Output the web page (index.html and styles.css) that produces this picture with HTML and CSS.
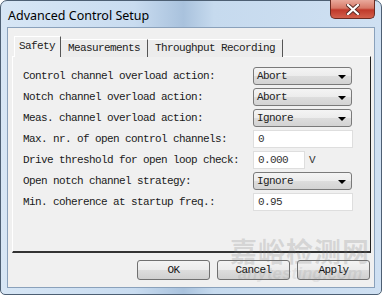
FILE: index.html
```html
<!DOCTYPE html>
<html lang="en">
<head>
<meta charset="UTF-8">
<title>Advanced Control Setup</title>
<link rel="stylesheet" href="styles.css">
</head>
<body>
<div class="window">
  <div class="titlebar">
    <span class="title">Advanced Control Setup</span>
    <span class="close">
      <svg width="14" height="11" viewBox="0 0 14 11">
        <path d="M2 1 L12 10 M12 1 L2 10" stroke="#5a2a24" stroke-width="4" stroke-linecap="square"/>
        <path d="M2 1 L12 10 M12 1 L2 10" stroke="#fff" stroke-width="2.2" stroke-linecap="square"/>
      </svg>
    </span>
  </div>
  <div class="client">
    <div class="tabs">
      <div class="tab active">Safety</div>
      <div class="tab">Measurements</div>
      <div class="tab">Throughput Recording</div>
    </div>
    <div class="panel">
      <div class="row">
        <span class="label">Control channel overload action:</span>
        <div class="select">Abort<i class="arrow"></i></div>
      </div>
      <div class="row">
        <span class="label">Notch channel overload action:</span>
        <div class="select">Abort<i class="arrow"></i></div>
      </div>
      <div class="row">
        <span class="label">Meas. channel overload action:</span>
        <div class="select">Ignore<i class="arrow"></i></div>
      </div>
      <div class="row">
        <span class="label">Max. nr. of open control channels:</span>
        <div class="field">0</div>
      </div>
      <div class="row">
        <span class="label">Drive threshold for open loop check:</span>
        <div class="field small">0.000</div>
        <span class="unit">V</span>
      </div>
      <div class="row">
        <span class="label">Open notch channel strategy:</span>
        <div class="select">Ignore<i class="arrow"></i></div>
      </div>
      <div class="row">
        <span class="label">Min. coherence at startup freq.:</span>
        <div class="field">0.95</div>
      </div>
    </div>
    <div class="buttons">
      <button type="button" class="btn">OK</button>
      <button type="button" class="btn">Cancel</button>
      <button type="button" class="btn">Apply</button>
    </div>
    <div class="watermark">
      <span class="wm-cn">嘉峪检测网</span>
      <span class="wm-en">anytesting.com</span>
    </div>
  </div>
</div>
</body>
</html>
```

FILE: styles.css
```css
body {
  margin: 0;
  width: 382px;
  height: 295px;
  background: #fff;
  font-family: 'Liberation Mono', monospace;
  font-size: 11px;
  letter-spacing: -0.6px;
  color: #111;
}
.window {
  box-sizing: border-box;
  width: 382px;
  height: 295px;
  border: 1px solid #4d5f73;
  border-radius: 7px 7px 5px 5px;
  padding: 0 6px 6px 6px;
  background: linear-gradient(90deg, #d7e6f5 0%, #c9dcf0 35%, #a9c2dd 48%, #c6daee 56%, #cfe0f2 100%);
  display: flex;
  flex-direction: column;
}
.titlebar {
  height: 26px;
  display: flex;
  align-items: flex-start;
}
.title {
  font-family: 'Noto Sans', sans-serif;
  font-size: 12.5px;
  letter-spacing: 0;
  line-height: 16px;
  padding: 7px 0 0 1px;
  color: #000;
}
.close {
  margin: -1px 0 0 auto;
  width: 45px;
  height: 19px;
  box-sizing: border-box;
  border: 1px solid #6b2b22;
  border-top: none;
  border-radius: 0 0 5px 5px;
  background: linear-gradient(#e9a99c 0%, #d77867 45%, #c0392a 55%, #d2604c 100%);
  display: flex;
  align-items: center;
  justify-content: center;
}
.client {
  position: relative;
  flex: 1;
  border: 1px solid #8aa1bb;
  background: #f0f0f0;
  padding: 9px 3px 0 4px;
  overflow: hidden;
}
.tabs {
  display: flex;
  height: 20px;
  margin-left: 2px;
  align-items: flex-end;
}
.tab {
  height: 17px;
  line-height: 17px;
  padding: 0 7px;
  border-right: 1px solid #555;
  border-top: 1px solid #fff;
  background: #ececec;
  color: #222;
}
.tab.active {
  height: 20px;
  line-height: 18px;
  padding: 0 5px 0 4px;
  background: #f0f0f0;
  border-left: 1px solid #fff;
}
.panel {
  box-sizing: border-box;
  height: 197px;
  margin-top: -1px;
  border-top: 1px solid #fff;
  border-left: 1px solid #fff;
  border-right: 1px solid #222;
  border-bottom: 2px solid #333;
  padding: 10px 0 0 10px;
  display: flex;
  flex-direction: column;
  gap: 3px;
}
.row {
  display: flex;
  align-items: center;
  height: 18px;
}
.label {
  width: 230px;
  flex: none;
  color: #1a1a1a;
}
.select {
  box-sizing: border-box;
  width: 99px;
  height: 18px;
  border: 1px solid #7a7a7a;
  border-radius: 3px;
  background: linear-gradient(#f4f4f4 0%, #ececec 50%, #dddddd 52%, #d3d3d3 100%);
  padding-left: 3px;
  display: flex;
  align-items: center;
  color: #222;
}
.arrow {
  margin: 2px 5px 0 auto;
  width: 0;
  height: 0;
  border-left: 4px solid transparent;
  border-right: 4px solid transparent;
  border-top: 4px solid #000;
}
.field {
  box-sizing: border-box;
  width: 100px;
  height: 18px;
  border: 1px solid #dedede;
  background: #fff;
  padding-left: 4px;
  display: flex;
  align-items: center;
  color: #333;
}
.field.small {
  width: 52px;
}
.unit {
  margin-left: 4px;
  color: #333;
}
.buttons {
  display: flex;
  justify-content: flex-end;
  gap: 7px;
  margin-top: 7px;
  padding-right: 1px;
}
.btn {
  box-sizing: border-box;
  width: 73px;
  height: 20px;
  border: 1px solid #707070;
  border-radius: 3px;
  background: linear-gradient(#f3f3f3 0%, #ebebeb 50%, #dddddd 51%, #d0d0d0 100%);
  font-family: 'Liberation Mono', monospace;
  font-size: 11px;
  letter-spacing: -0.6px;
  color: #111;
  padding: 0;
}
.watermark {
  position: absolute;
  left: 222px;
  top: 209px;
  display: flex;
  flex-direction: column;
  align-items: center;
  pointer-events: none;
  letter-spacing: 0;
}
.wm-cn {
  font-family: 'Noto Sans CJK SC', sans-serif;
  font-size: 27px;
  font-weight: bold;
  line-height: 28px;
  letter-spacing: 1px;
  color: rgba(120, 120, 120, 0.22);
}
.wm-en {
  font-family: 'Liberation Sans', sans-serif;
  font-style: italic;
  font-weight: bold;
  font-size: 17px;
  line-height: 18px;
  color: rgba(120, 120, 120, 0.14);
}
```
